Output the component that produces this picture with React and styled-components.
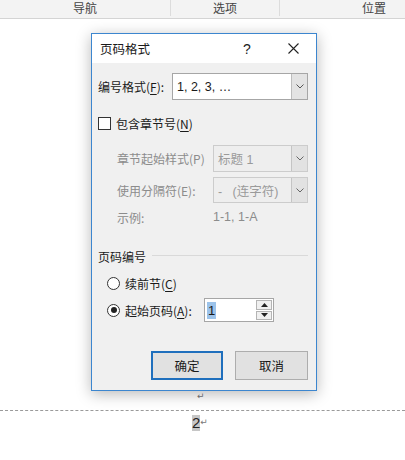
import styled, { createGlobalStyle } from "styled-components";

const GlobalStyle = createGlobalStyle`
  html, body {
    margin: 0;
    padding: 0;
    background: #fff;
  }
  body {
    font-family: "Noto Sans CJK SC", "Noto Sans", sans-serif;
    font-size: 12px;
    color: #1a1a1a;
  }
`;

const Page = styled.div`
  position: relative;
  width: 405px;
  height: 460px;
  overflow: hidden;
  background: #fff;
`;

const TopBar = styled.div`
  display: grid;
  grid-template-columns: 170px 109px 1fr;
  height: 19px;
  background: #f3f3f3;
  border-bottom: 1px solid #d4d4d4;
  box-sizing: border-box;
`;

const TopCell = styled.div`
  display: flex;
  align-items: center;
  justify-content: ${({ $align }) => $align || "center"};
  padding: 0 ${({ $pad }) => $pad || 0}px;
  height: 16px;
  line-height: 16px;
  font-size: 12px;
  color: #444;
  border-left: ${({ $sep }) => ($sep ? "1px solid #dcdcdc" : "none")};
`;

const Doc = styled.div`
  padding-top: 374px;
  display: flex;
  flex-direction: column;
`;

const Mark = styled.span`
  font-family: "DejaVu Sans", sans-serif;
  font-size: 9px;
  color: #777;
  line-height: 10px;
`;

const ParaLine = styled.div`
  display: flex;
  align-items: flex-end;
  padding-left: ${({ $x }) => $x}px;
  height: ${({ $h }) => $h}px;
`;

const Dashed = styled.div`
  margin-top: 9px;
  border-top: 1px dashed #9a9a9a;
`;

const PageNum = styled.span`
  background: #c6c6c6;
  font-family: "Liberation Sans", sans-serif;
  font-size: 15px;
  line-height: 16px;
  color: #222;
`;

const Dialog = styled.div`
  position: absolute;
  left: 91px;
  top: 33px;
  width: 226px;
  box-sizing: border-box;
  border: 1px solid #3c86cf;
  background: #f0f0f0;
  box-shadow: 0 3px 14px rgba(0, 0, 0, 0.28);
`;

const TitleBar = styled.div`
  display: flex;
  align-items: center;
  height: 29px;
  background: #fff;
  padding-left: 8px;
`;

const Title = styled.div`
  flex: 1;
  font-size: 12.5px;
  color: #1a1a1a;
`;

const TitleBtn = styled.div`
  width: ${({ $w }) => $w}px;
  display: flex;
  justify-content: center;
  align-items: center;
  font-family: "Liberation Sans", sans-serif;
  font-size: 14px;
  color: #222;
`;

const Body = styled.div`
  display: flex;
  flex-direction: column;
  padding: 10px 8px 10px 6px;
`;

const Row = styled.div`
  display: flex;
  align-items: center;
  height: ${({ $h }) => $h || 20}px;
  margin-top: ${({ $mt }) => $mt || 0}px;
  padding-left: ${({ $indent }) => $indent || 0}px;
  color: ${({ $muted }) => ($muted ? "#8c8c8c" : "#1a1a1a")};
  white-space: nowrap;
`;

const Label = styled.div`
  width: ${({ $w }) => $w}px;
  flex-shrink: 0;
`;

const U = styled.span`
  text-decoration: underline;
  text-underline-offset: 2px;
`;

const Select = styled.div`
  display: flex;
  width: ${({ $w }) => $w}px;
  height: 100%;
  box-sizing: border-box;
  border: 1px solid ${({ $disabled }) => ($disabled ? "#cccccc" : "#a6a6a6")};
  background: ${({ $disabled }) => ($disabled ? "#eeeeee" : "#fff")};
`;

const SelectValue = styled.div`
  flex: 1;
  display: flex;
  align-items: center;
  padding-left: 4px;
  font-family: "Liberation Sans", "Noto Sans CJK SC", sans-serif;
  font-size: 12.5px;
  color: ${({ $disabled }) => ($disabled ? "#9a9a9a" : "#1a1a1a")};
`;

const DropBtn = styled.div`
  width: 15px;
  display: flex;
  align-items: center;
  justify-content: center;
  background: ${({ $disabled }) => ($disabled ? "#e2e2e2" : "#e3e3e3")};
  border-left: 1px solid ${({ $disabled }) => ($disabled ? "#c4c4c4" : "#bdbdbd")};
`;

const Check = styled.div`
  width: 11px;
  height: 11px;
  border: 1px solid #333;
  background: #fff;
  margin-right: 5px;
`;

const Radio = styled.div`
  width: 11px;
  height: 11px;
  border: 1px solid #333;
  border-radius: 50%;
  background: #fff;
  margin: 0 5px 0 9px;
  display: flex;
  align-items: center;
  justify-content: center;

  &::after {
    content: "";
    display: ${({ $on }) => ($on ? "block" : "none")};
    width: 6px;
    height: 6px;
    border-radius: 50%;
    background: #222;
  }
`;

const Group = styled.div`
  display: flex;
  align-items: center;
  height: 20px;
  margin-top: 19px;
  gap: 6px;

  &::after {
    content: "";
    flex: 1;
    border-top: 1px solid #d9d9d9;
    margin-top: -1px;
  }
`;

const Spin = styled.div`
  display: flex;
  width: 70px;
  height: 100%;
  box-sizing: border-box;
  border: 1px solid #a6a6a6;
  background: #fff;
`;

const SpinValue = styled.div`
  flex: 1;
  display: flex;
  align-items: center;
  padding-left: 2px;

  span {
    background: #9cc3ea;
    font-family: "Liberation Sans", sans-serif;
    font-size: 13px;
    line-height: 17px;
    padding: 0 1px;
  }
`;

const SpinBtns = styled.div`
  width: 16px;
  display: flex;
  flex-direction: column;
  gap: 1px;
  padding: 1px 1px 1px 0;
`;

const SpinBtn = styled.div`
  flex: 1;
  display: flex;
  align-items: center;
  justify-content: center;
  background: #f0f0f0;
  border: 1px solid #b4b4b4;
`;

const Buttons = styled.div`
  display: flex;
  justify-content: flex-end;
  gap: 12px;
  margin-top: 29px;
`;

const Button = styled.div`
  width: ${({ $w }) => $w}px;
  height: 29px;
  box-sizing: border-box;
  display: flex;
  align-items: center;
  justify-content: center;
  background: #e1e1e1;
  border: ${({ $primary }) => ($primary ? "2px solid #1f6fbd" : "1px solid #adadad")};
  font-size: 12.5px;
  color: #1a1a1a;
`;

const Chevron = ({ color = "#555" }) => (
  <svg width="8" height="5" viewBox="0 0 8 5">
    <path d="M0.5 0.5 L4 4 L7.5 0.5" fill="none" stroke={color} strokeWidth="1" />
  </svg>
);

const Tri = ({ up }) => (
  <svg width="7" height="4" viewBox="0 0 7 4">
    <path d={up ? "M0 4 L3.5 0 L7 4 Z" : "M0 0 L3.5 4 L7 0 Z"} fill="#222" />
  </svg>
);

export default function App() {
  return (
    <>
      <GlobalStyle />
      <Page>
        <TopBar>
          <TopCell>导航</TopCell>
          <TopCell $sep>选项</TopCell>
          <TopCell $sep $align="flex-end" $pad={19}>位置</TopCell>
        </TopBar>

        <Doc>
          <ParaLine $x={197} $h={8}>
            <Mark>↵</Mark>
          </ParaLine>
          <Dashed />
          <ParaLine $x={192} $h={20}>
            <PageNum>2</PageNum>
            <Mark style={{ marginBottom: 4 }}>↵</Mark>
          </ParaLine>
        </Doc>

        <Dialog>
          <TitleBar>
            <Title>页码格式</Title>
            <TitleBtn $w={46}>?</TitleBtn>
            <TitleBtn $w={46}>
              <svg width="11" height="11" viewBox="0 0 11 11">
                <path d="M0.5 0.5 L10.5 10.5 M10.5 0.5 L0.5 10.5" stroke="#222" strokeWidth="1.1" />
              </svg>
            </TitleBtn>
          </TitleBar>

          <Body>
            <Row $h={27}>
              <Label $w={74}>
                编号格式(<U>F</U>):
              </Label>
              <Select $w={136}>
                <SelectValue>1, 2, 3, …</SelectValue>
                <DropBtn>
                  <Chevron />
                </DropBtn>
              </Select>
            </Row>

            <Row $h={22} $mt={12}>
              <Check />
              包含章节号(<U>N</U>)
            </Row>

            <Row $h={27} $mt={11} $indent={19} $muted>
              <Label $w={96}>章节起始样式(P)</Label>
              <Select $w={95} $disabled>
                <SelectValue $disabled>标题 1</SelectValue>
                <DropBtn $disabled>
                  <Chevron color="#666" />
                </DropBtn>
              </Select>
            </Row>

            <Row $h={26} $mt={5} $indent={19} $muted>
              <Label $w={96}>使用分隔符(E):</Label>
              <Select $w={95} $disabled>
                <SelectValue $disabled>-&nbsp;&nbsp;&nbsp;(连字符)</SelectValue>
                <DropBtn $disabled>
                  <Chevron color="#666" />
                </DropBtn>
              </Select>
            </Row>

            <Row $h={20} $mt={4} $indent={19} $muted>
              <Label $w={96}>示例:</Label>
              <span style={{ fontFamily: "Liberation Sans, sans-serif", fontSize: 12.5 }}>1-1, 1-A</span>
            </Row>

            <Group>页码编号</Group>

            <Row $h={20} $mt={7}>
              <Radio />
              续前节(<U>C</U>)
            </Row>

            <Row $h={24} $mt={5}>
              <Radio $on />
              <Label $w={79}>
                起始页码(<U>A</U>):
              </Label>
              <Spin>
                <SpinValue>
                  <span>1</span>
                </SpinValue>
                <SpinBtns>
                  <SpinBtn>
                    <Tri up />
                  </SpinBtn>
                  <SpinBtn>
                    <Tri />
                  </SpinBtn>
                </SpinBtns>
              </Spin>
            </Row>

            <Buttons>
              <Button $w={72} $primary>确定</Button>
              <Button $w={73}>取消</Button>
            </Buttons>
          </Body>
        </Dialog>
      </Page>
    </>
  );
}
